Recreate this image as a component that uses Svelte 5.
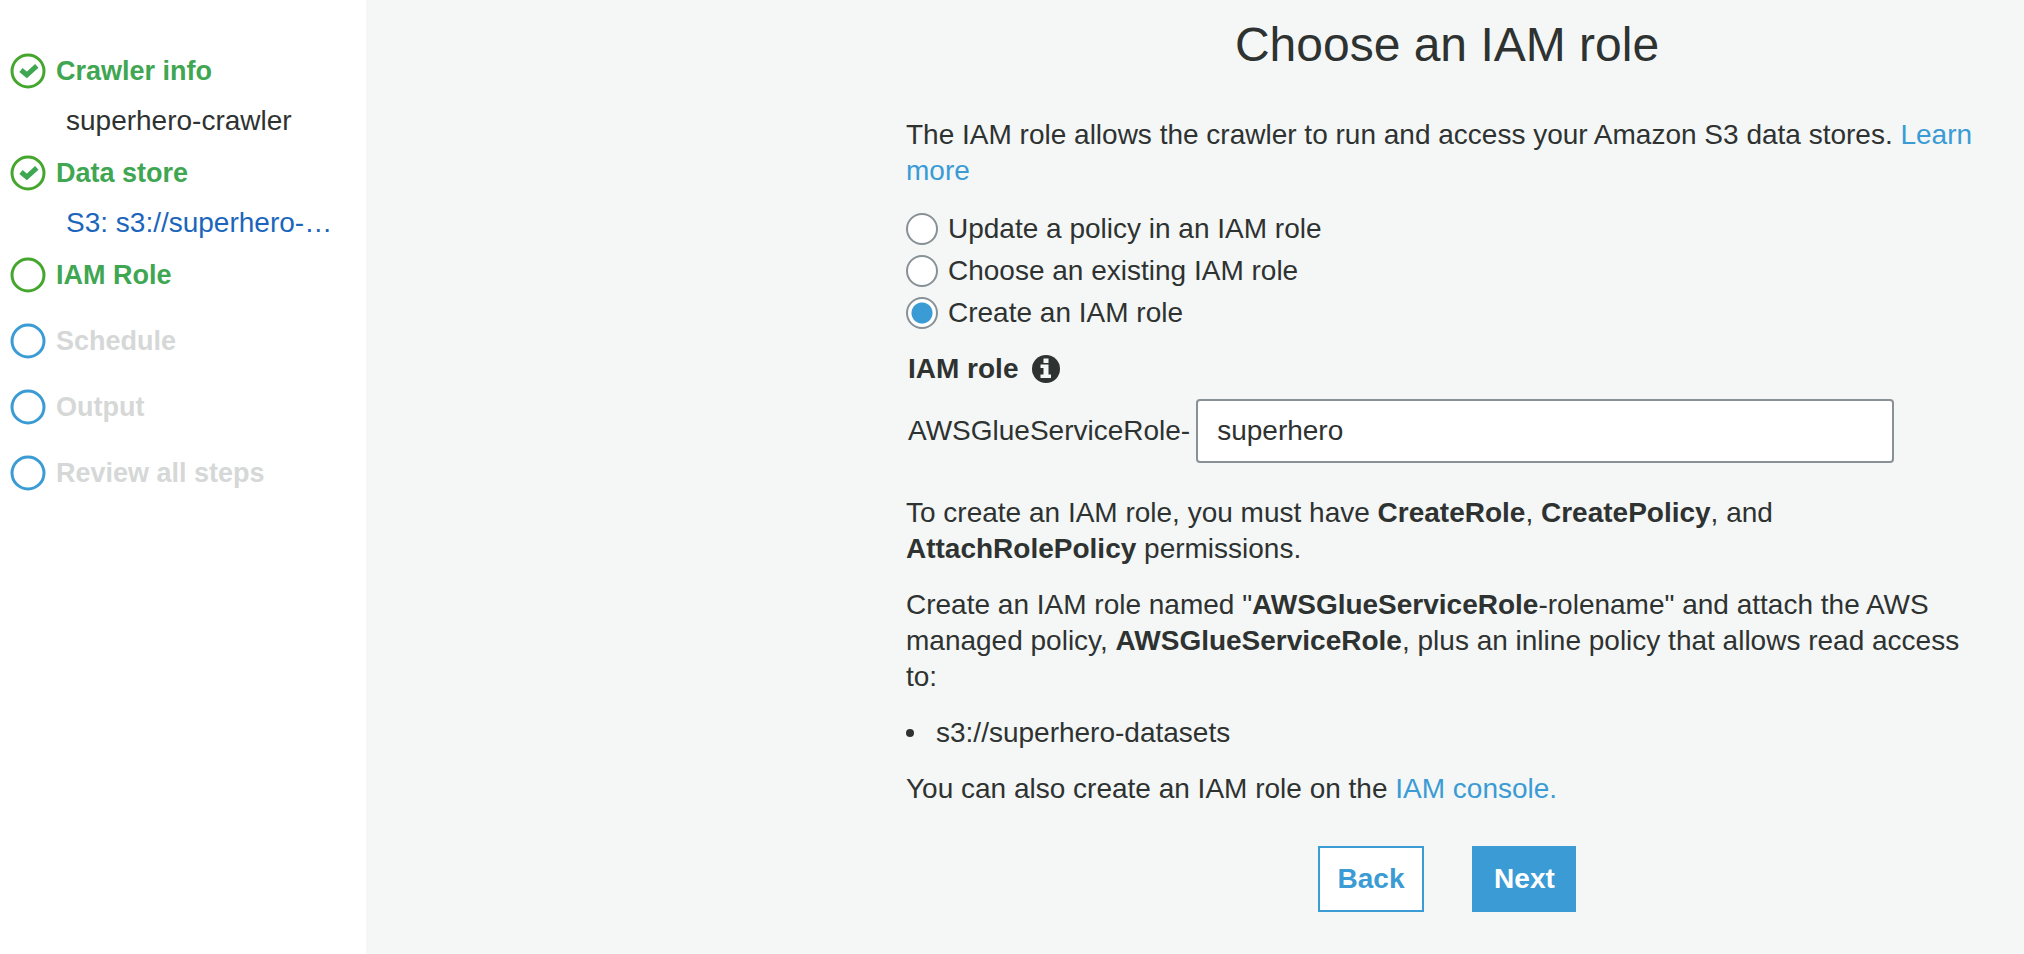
<script>
  const steps = [
    { label: 'Crawler info', state: 'done', detail: 'superhero-crawler' },
    { label: 'Data store', state: 'done', detail: 'S3: s3://superhero-datasets', link: true },
    { label: 'IAM Role', state: 'current' },
    { label: 'Schedule', state: 'pending' },
    { label: 'Output', state: 'pending' },
    { label: 'Review all steps', state: 'pending' }
  ];

  const options = [
    { value: 'update', label: 'Update a policy in an IAM role' },
    { value: 'existing', label: 'Choose an existing IAM role' },
    { value: 'create', label: 'Create an IAM role' }
  ];

  let choice = $state('create');
  let roleName = $state('superhero');
</script>

<div class="wizard">
  <nav class="sidebar" aria-label="Crawler steps">
    <ol class="steps">
      {#each steps as step}
        <li class="step {step.state}">
          <div class="step-head">
            <svg class="step-icon" viewBox="0 0 36 36" aria-hidden="true">
              <circle cx="18" cy="18" r="16" />
              {#if step.state === 'done'}
                <path d="M11 17 L16.8 22 L26.800 12.800" />
              {/if}
            </svg>
            <span class="step-label">{step.label}</span>
          </div>
          {#if step.link}
            <a class="detail" href="#data-store">{step.detail}</a>
          {:else if step.detail}
            <span class="detail">{step.detail}</span>
          {/if}
        </li>
      {/each}
    </ol>
  </nav>

  <main class="content">
    <form class="panel" onsubmit={(event) => event.preventDefault()}>
      <h1>Choose an IAM role</h1>

      <p>
        The IAM role allows the crawler to run and access your Amazon S3 data stores.
        <a href="#learn-more">Learn more</a>
      </p>

      <div class="options" role="radiogroup" aria-label="IAM role option">
        {#each options as option}
          <label class="option">
            <input type="radio" name="role-option" value={option.value} bind:group={choice} />
            <span>{option.label}</span>
          </label>
        {/each}
      </div>

      <div class="field-title">
        <label for="role-name">IAM role</label>
        <svg class="info" viewBox="0 0 28 28" aria-hidden="true">
          <circle cx="14" cy="14" r="14" />
          <path d="M11.5 3.500h5v4.500h-5z M8.500 9.500h8v10h2.500v3.500H8.500v-3.500h3v-6.500h-3z" />
        </svg>
      </div>
      <div class="field">
        <span>AWSGlueServiceRole-</span>
        <input id="role-name" type="text" bind:value={roleName} />
      </div>

      <p>
        To create an IAM role, you must have <b>CreateRole</b>, <b>CreatePolicy</b>, and
        <b>AttachRolePolicy</b> permissions.
      </p>
      <p>
        Create an IAM role named "<b>AWSGlueServiceRole</b>-rolename" and attach the AWS managed
        policy, <b>AWSGlueServiceRole</b>, plus an inline policy that allows read access to:
      </p>
      <ul class="paths">
        <li>s3://superhero-datasets</li>
      </ul>
      <p>You can also create an IAM role on the <a href="#iam-console">IAM console.</a></p>

      <div class="actions">
        <button type="button" class="secondary">Back</button>
        <button type="submit" class="primary">Next</button>
      </div>
    </form>
  </main>
</div>

<style>
  :global(body) {
    margin: 0;
    background: #f4f7f6;
  }

  .wizard {
    display: flex;
    min-height: 100vh;
    font-family: 'Liberation Sans', Arial, sans-serif;
    font-size: 28px;
    line-height: 36px;
    color: #2e3231;
  }

  .sidebar {
    flex: 0 0 366px;
    min-width: 0;
    box-sizing: border-box;
    padding: 53px 28px 0 10px;
    background: #fff;
  }

  .steps {
    display: flex;
    flex-direction: column;
    margin: 0;
    padding: 0;
    list-style: none;
  }

  .step {
    padding-bottom: 30px;
  }

  .step.done {
    padding-bottom: 16px;
  }

  .step-head {
    display: flex;
    align-items: center;
    gap: 10px;
  }

  .step-icon {
    width: 36px;
    height: 36px;
    fill: none;
    stroke: #44a62d;
    stroke-width: 3;
  }

  .step-icon path {
    stroke: #3fa652;
    stroke-width: 5;
  }

  .step-label {
    font-size: 27px;
    font-weight: bold;
    color: #3fa652;
  }

  .pending .step-icon {
    stroke: #3a9bd5;
  }

  .pending .step-label {
    color: #d5d8d7;
  }

  .detail {
    display: block;
    margin: 14px 0 0 56px;
    overflow: hidden;
    text-overflow: ellipsis;
    white-space: nowrap;
  }

  a {
    color: #3a9bd5;
    text-decoration: none;
  }

  a.detail {
    color: #1b66bb;
  }

  .content {
    flex: 1;
    display: flex;
    justify-content: flex-end;
    padding: 17px 36px 40px;
  }

  .panel {
    flex: 0 1 1082px;
  }

  h1 {
    margin: 0 0 44px;
    font-size: 48px;
    font-weight: normal;
    line-height: 56px;
    text-align: center;
  }

  p {
    margin: 0 0 20px;
  }

  .options {
    display: flex;
    flex-direction: column;
    align-items: flex-start;
    gap: 2px;
    margin-bottom: 18px;
  }

  .option {
    display: flex;
    align-items: center;
    gap: 10px;
    height: 40px;
  }

  .option input {
    appearance: none;
    box-sizing: border-box;
    width: 32px;
    height: 32px;
    margin: 0;
    border: 2px solid #879196;
    border-radius: 50%;
    background: #fff;
  }

  .option input:checked {
    background: radial-gradient(circle, #3a9bd5 10px, #fff 11px);
  }

  .field-title {
    display: flex;
    align-items: center;
    gap: 14px;
    margin: 0 0 12px 2px;
    font-weight: bold;
  }

  .info {
    width: 28px;
    height: 28px;
    fill: #2e3231;
  }

  .info path {
    fill: #f4f7f6;
  }

  .field {
    display: flex;
    align-items: center;
    gap: 6px;
    margin: 0 94px 32px 2px;
  }

  .field input {
    flex: 1;
    min-width: 0;
    box-sizing: border-box;
    height: 64px;
    padding: 0 19px;
    border: 2px solid #879196;
    border-radius: 4px;
    background: #fff;
    color: inherit;
    font: inherit;
  }

  .paths {
    margin: 0 0 20px;
    padding: 0;
    list-style: none;
  }

  .paths li {
    display: flex;
    align-items: center;
    gap: 22px;
  }

  .paths li::before {
    content: '';
    width: 8px;
    height: 8px;
    border-radius: 50%;
    background: #2e3231;
  }

  .actions {
    display: flex;
    justify-content: center;
    gap: 48px;
    padding-top: 19px;
  }

  button {
    height: 66px;
    min-width: 104px;
    padding: 0 18px;
    border: 2px solid #3a9bd5;
    font: inherit;
    font-weight: bold;
  }

  .secondary {
    background: #fff;
    color: #3a9bd5;
  }

  .primary {
    background: #3a9bd5;
    color: #fff;
  }
</style>
